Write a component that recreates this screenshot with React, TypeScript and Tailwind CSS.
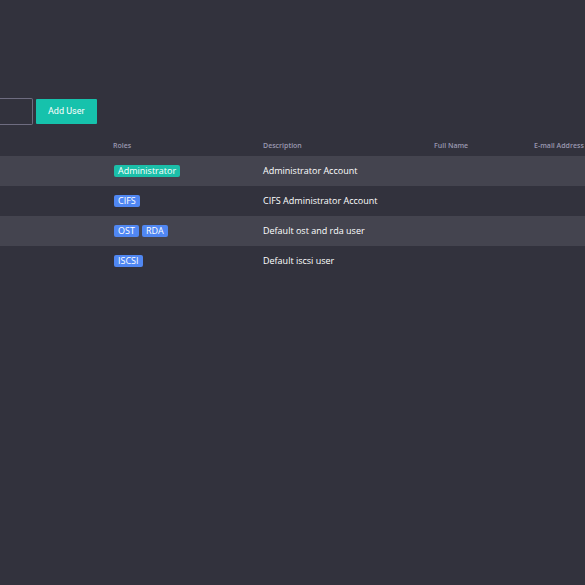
import clsx from "clsx";

type User = {
  roles: string[];
  description: string;
  fullName: string;
  email: string;
};

const users: User[] = [
  { roles: ["Administrator"], description: "Administrator Account", fullName: "", email: "" },
  { roles: ["CIFS"], description: "CIFS Administrator Account", fullName: "", email: "" },
  { roles: ["OST", "RDA"], description: "Default ost and rda user", fullName: "", email: "" },
  { roles: ["ISCSI"], description: "Default iscsi user", fullName: "", email: "" },
];

const RoleBadge = ({ role }: { role: string }) => (
  <span
    className={clsx(
      "rounded-xs px-1 text-[9px] leading-3 text-white",
      role === "Administrator" ? "bg-[#1bbfa9]" : "bg-[#5087f2]"
    )}
  >
    {role}
  </span>
);

const Toolbar = () => (
  <div className="flex h-[27px] items-center gap-[3px]">
    <input
      type="text"
      aria-label="Search users"
      className="h-[27px] w-[33px] rounded-r-xs border border-l-0 border-[#6e6c80] bg-transparent px-2 text-[9px] text-white outline-none"
    />
    <button
      type="button"
      className="h-[25px] rounded-[1px] bg-[#16c2ac] px-3 font-['Roboto',sans-serif] text-[9px] text-white hover:bg-[#14a995]"
    >
      Add User
    </button>
  </div>
);

const UsersTable = () => (
  <table className="w-full table-fixed border-collapse text-left">
    <colgroup>
      <col className="w-[113px]" />
      <col className="w-[150px]" />
      <col className="w-[171px]" />
      <col className="w-[100px]" />
      <col />
    </colgroup>
    <thead>
      <tr className="h-[21px] text-[7px] text-[#9a98b0]">
        <td />
        <th scope="col" className="p-0 pt-0.5 font-semibold">Roles</th>
        <th scope="col" className="p-0 pt-0.5 font-semibold">Description</th>
        <th scope="col" className="p-0 pt-0.5 font-semibold">Full Name</th>
        <th scope="col" className="p-0 pt-0.5 font-semibold whitespace-nowrap">E-mail Address</th>
      </tr>
    </thead>
    <tbody>
      {users.map((user) => (
        <tr key={user.description} className="h-[30px] text-[9px] text-white odd:bg-[#44444f]">
          <td />
          <td className="p-0">
            <div className="flex gap-[3px] pl-px">
              {user.roles.map((role) => (
                <RoleBadge key={role} role={role} />
              ))}
            </div>
          </td>
          <td className="p-0">{user.description}</td>
          <td className="p-0">{user.fullName}</td>
          <td className="p-0">{user.email}</td>
        </tr>
      ))}
    </tbody>
  </table>
);

export default function App() {
  return (
    <main className="min-h-screen overflow-x-hidden bg-[#32323d] pt-[98px] font-['Open_Sans',sans-serif]">
      <Toolbar />
      {/* Users list */}
      <div className="pt-2.5">
        <UsersTable />
      </div>
    </main>
  );
}
